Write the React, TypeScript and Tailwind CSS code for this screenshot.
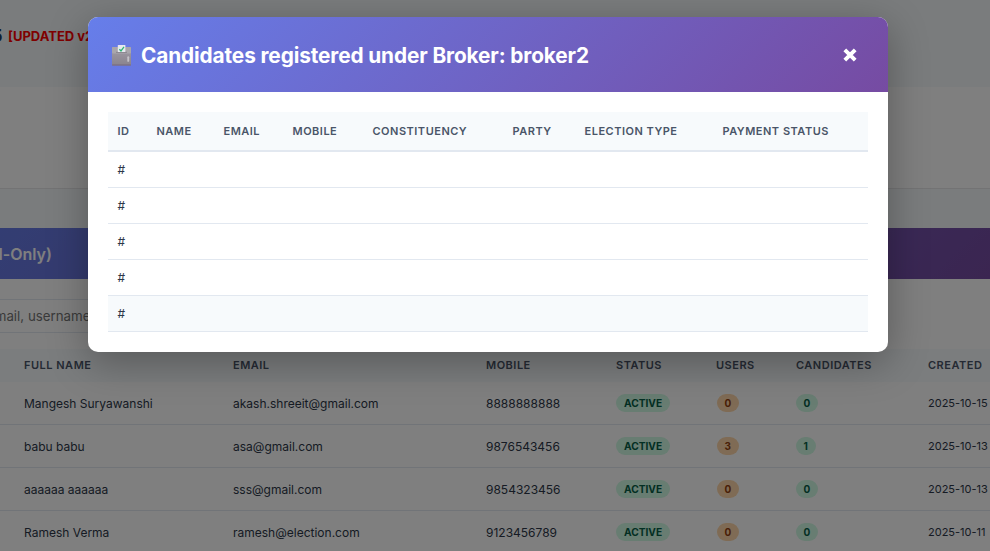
type Broker = { name: string; email: string; mobile: string; users: number; candidates: number; created: string };

const brokers: Broker[] = [
  { name: "Mangesh Suryawanshi", email: "akash.shreeit@gmail.com", mobile: "8888888888", users: 0, candidates: 0, created: "2025-10-15" },
  { name: "babu babu", email: "asa@gmail.com", mobile: "9876543456", users: 3, candidates: 1, created: "2025-10-13" },
  { name: "aaaaaa aaaaaa", email: "sss@gmail.com", mobile: "9854323456", users: 0, candidates: 0, created: "2025-10-13" },
  { name: "Ramesh Verma", email: "ramesh@election.com", mobile: "9123456789", users: 0, candidates: 0, created: "2025-10-11" },
];

const brokerGrid = "grid grid-cols-[209px_253px_130px_100px_80px_132px_100px] items-center pl-6 whitespace-nowrap";
const candidateGrid = "grid grid-cols-[39px_67px_69px_80px_140px_72px_138px_1fr] items-center pl-[9.5px] whitespace-nowrap";
const headText = "text-[11px] font-[560] tracking-[0.5px] text-[#4a5568]";

function BallotBox() {
  return (
    <svg className="h-[22px] w-[22px] shrink-0" viewBox="0 0 22 22">
      <defs>
        <linearGradient id="box" x1="0" y1="0" x2="0" y2="1">
          <stop offset="0" stopColor="#a29da6" />
          <stop offset="1" stopColor="#89838e" />
        </linearGradient>
      </defs>
      <rect x="2" y="3" width="19" height="18.5" rx="1" fill="url(#box)" />
      <rect x="2" y="3" width="19" height="6.5" rx="1" fill="#a9a6ab" />
      <rect x="6" y="7.8" width="11" height="1" fill="#88828c" />
      <rect x="2" y="20.5" width="19" height="1" rx=".5" fill="#77687f" />
      <rect x="7.8" y="1" width="7.6" height="7" rx=".5" fill="#e7e9f0" />
      <path d="M9.4 5.2l1.6 1.7 3-4" fill="none" stroke="#2bb673" strokeWidth="1.3" />
      <rect x="17.3" y="12.3" width="1.9" height="5.5" rx=".9" fill="#c5c2c8" />
    </svg>
  );
}

function Page() {
  return (
    <div className="flex h-[551px] flex-col bg-[#f5f8fa] text-[#2d3748]">
      <div className="flex h-[87px] shrink-0 items-start whitespace-nowrap pt-[25px]">
        <span className="-ml-[9px] w-[17px] text-[18px] leading-[21px] font-bold text-[#1e3a5f]">5</span>
        <span className="text-[13px] leading-[23px] font-bold text-[#ff0000]">[UPDATED v2.0]</span>
      </div>
      <div className="h-[102px] shrink-0 border-b border-[#e6e6e8] bg-white" />
      <div className="h-[39px] shrink-0" />
      <div className="-ml-[60px] flex h-[51px] shrink-0 items-center bg-linear-[135deg,#667eea,#764ba2] text-[16px] font-semibold whitespace-nowrap text-white">
        <span className="flex w-[112px] justify-end">(Read-Only)</span>
      </div>
      <div className="flex flex-1 flex-col bg-white">
        <div className="mt-5 flex h-[34px] w-[300px] shrink-0 items-center overflow-hidden border-y border-[#e2e8f0] pt-[2px] whitespace-nowrap">
          <span className="-ml-[13px] text-[13.3px] text-[#757575]">email, username...</span>
        </div>
        <div className={`${brokerGrid} ${headText} mt-4 h-[33px] shrink-0 bg-[#f7fafc]`}>
          <span>FULL NAME</span><span>EMAIL</span><span>MOBILE</span><span>STATUS</span><span>USERS</span><span>CANDIDATES</span><span>CREATED</span>
        </div>
        {brokers.map((b) => (
          <div key={b.mobile} className={`${brokerGrid} h-[43px] shrink-0 border-b border-[#e2e8f0] text-[12px]`}>
            <span className="pt-[2px]">{b.name}</span>
            <span className="pt-[2px]">{b.email}</span>
            <span className="pt-[2px]">{b.mobile}</span>
            <span className="flex"><span className="rounded-full bg-[#d1fae5] px-2 text-[10.2px] leading-[18px] font-bold text-[#065f46]">ACTIVE</span></span>
            <span className="flex pl-[1px]"><span className="rounded-full bg-[#fed7aa] px-[7.6px] text-[10px] leading-[18px] font-bold text-[#92400e]">{b.users}</span></span>
            <span className="flex"><span className="rounded-full bg-[#d1fae5] px-[7.6px] text-[10px] leading-[18px] font-bold text-[#065f46]">{b.candidates}</span></span>
            <span className="text-[11px]">{b.created}</span>
          </div>
        ))}
      </div>
    </div>
  );
}

function CandidatesModal() {
  return (
    <div className="h-[335px] w-[800px] overflow-hidden rounded-[10px] bg-white shadow-[0_10px_40px_rgba(0,0,0,0.3)]">
      <div className="flex h-[75px] items-center bg-linear-[135deg,#667eea,#764ba2] pr-[29px] pl-[22px] text-white">
        <BallotBox />
        <h2 className="ml-[9px] pt-[2px] text-[20.8px] font-bold tracking-[-0.11px] whitespace-nowrap">Candidates registered under Broker: broker2</h2>
        <button className="ml-auto flex h-5 w-[18px] items-center justify-center" aria-label="Close">
          <svg className="h-[16px] w-[16px]" viewBox="0 0 16 16"><path d="M2.8 2.8l10.4 10.4M13.2 2.8L2.8 13.2" stroke="white" strokeWidth="3.9" /></svg>
        </button>
      </div>
      <div className="p-5">
        <div className={`${candidateGrid} ${headText} h-10 border-b-2 border-[#e2e8f0] bg-[#f7fafc]`}>
          <span>ID</span><span>NAME</span><span>EMAIL</span><span>MOBILE</span><span>CONSTITUENCY</span><span>PARTY</span><span>ELECTION TYPE</span><span>PAYMENT STATUS</span>
        </div>
        {[0, 1, 2, 3, 4].map((i) => (
          <div key={i} className={`${candidateGrid} h-9 border-b border-[#e2e8f0] text-[12px] text-[#2d3748] ${i === 4 ? "bg-[#f7fafc]" : ""}`}>
            <span>#</span>
          </div>
        ))}
      </div>
    </div>
  );
}

export default function App() {
  return (
    <div className="relative h-[551px] w-[990px] overflow-hidden font-['Inter',sans-serif]">
      <Page />
      <div className="absolute inset-0 bg-black/50 pt-[17px] pl-[88px]">
        <CandidatesModal />
      </div>
    </div>
  );
}
